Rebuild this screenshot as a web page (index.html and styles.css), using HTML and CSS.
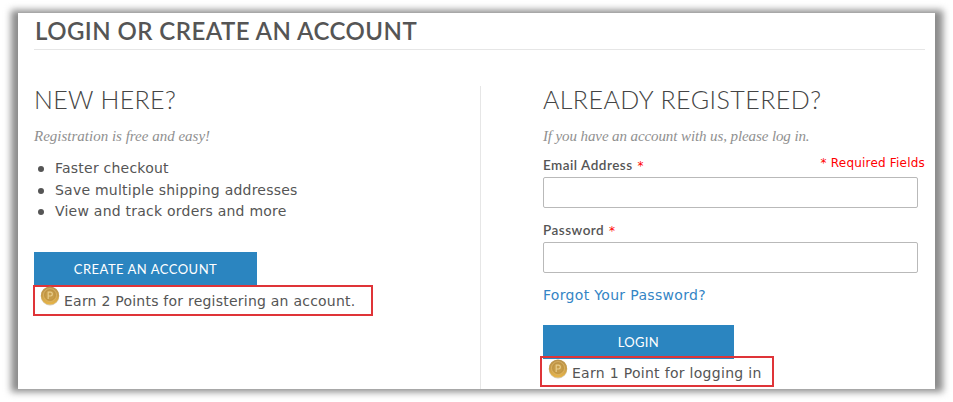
FILE: index.html
```
<!DOCTYPE html>
<html lang="en">
<head>
<meta charset="utf-8">
<title>Login or Create an Account</title>
<link rel="stylesheet" href="styles.css">
</head>
<body>
<svg class="defs" width="0" height="0" aria-hidden="true">
  <defs>
    <linearGradient id="gold" x1="0" y1="0" x2="0" y2="1">
      <stop offset="0" stop-color="#b9924c"/><stop offset=".5" stop-color="#c99d49"/><stop offset="1" stop-color="#e9b646"/>
    </linearGradient>
    <symbol id="coin" viewBox="0 0 20 20">
      <circle cx="10" cy="10.2" r="9.2" fill="#d6c9ae"/>
      <circle cx="10" cy="9.5" r="9.1" fill="url(#gold)"/>
      <circle cx="10" cy="9.2" r="6.6" fill="none" stroke="#d9b163" stroke-width=".9"/>
      <circle cx="10" cy="9.2" r="5.2" fill="#c79c49" stroke="#b58a3c" stroke-width=".5"/>
      <path d="M8.2 13V6.2h2.2a1.9 1.9 0 0 1 0 3.8H8.2" fill="none" stroke="#e8cc8a" stroke-width="1.2"/>
    </symbol>
  </defs>
</svg>
<main class="card">
  <h1 class="title"><span>LOGIN OR CREATE AN ACCOUNT</span></h1>
  <div class="columns">
    <section class="new">
      <h2><span class="h-new">NEW HERE?</span></h2>
      <p class="intro"><span class="i-new">Registration is free and easy!</span></p>
      <ul>
        <li>Faster checkout</li>
        <li>Save multiple shipping addresses</li>
        <li>View and track orders and more</li>
      </ul>
      <button class="btn create" type="button">CREATE AN ACCOUNT</button>
      <div class="points reg"><svg class="coin"><use href="#coin"/></svg><span>Earn 2 Points for registering an account.</span></div>
    </section>
    <section class="registered">
      <h2><span class="h-reg">ALREADY REGISTERED?</span></h2>
      <p class="intro"><span class="i-reg">If you have an account with us, please log in.</span></p>
      <div class="labels"><label for="email">Email Address <em>*</em></label><span class="required">* Required Fields</span></div>
      <input id="email" type="email">
      <div class="labels second"><label for="pass">Password <em>*</em></label></div>
      <input id="pass" type="password">
      <a class="forgot" href="#">Forgot Your Password?</a>
      <button class="btn login" type="button">LOGIN</button>
      <div class="points log"><svg class="coin"><use href="#coin"/></svg><span>Earn 1 Point for logging in</span></div>
    </section>
  </div>
</main>
</body>
</html>
```
FILE: styles.css
```
* { box-sizing: border-box; }
body { margin: 0; padding: 13px 18px; height: 402px; overflow: hidden; background: #fff; color: #555; font: 14px/21.5px "DejaVu Sans", sans-serif; letter-spacing: .23px; }
.defs { position: absolute; }
.card { position: relative; z-index: 0; width: 917px; height: 376px; padding: 0 10px 0 17px; }
.card::before, .card::after { content: ""; position: absolute; z-index: -1; }
.card::before { inset: -3px -8px -3px -7px; background: #8c8c8c; filter: blur(3.5px); z-index: -2; }
.card::after { inset: 0; background: #fff; }
h1, h2, p, ul { margin: 0; font-weight: 400; }
.title { height: 37px; border-bottom: 1px solid #e6e6e6; font: 600 24px/36px Lato, sans-serif; letter-spacing: .45px; color: #555; margin-left: -1px; padding-left: 1px; }
.columns { display: flex; margin-top: 36px; margin-left: -1px; height: 303px; }
.new { width: 448px; border-right: 1px solid #e6e6e6; }
.registered { width: 383px; margin-left: 62px; }
h2 { height: 28px; font: 300 25px/26px Lato, sans-serif; color: #444; white-space: nowrap; }
.h-new { letter-spacing: .35px; }
.h-reg { letter-spacing: .45px; }
.intro { height: 21px; margin-top: 12px; font: italic 15px/21px "Liberation Serif", serif; color: #909090; white-space: nowrap; }
.i-new { letter-spacing: 0; }
.i-reg { letter-spacing: -.1px; }
ul { margin-top: 11px; padding-left: 21px; list-style: none; }
li { position: relative; }
li::before { content: ""; position: absolute; left: -17px; top: 8px; width: 6px; height: 6px; border-radius: 50%; background: #555; }
.btn { display: block; height: 34px; padding: 0; border: 0; background: #2b85c0; color: #fff; font: 13px/34px Lato, sans-serif; }
.create { width: 223px; margin-top: 29px; letter-spacing: .5px; }
.login { width: 191px; margin-top: 19px; letter-spacing: .3px; }
.points { position: relative; display: flex; height: 31px; border: 2px solid #df3438; white-space: nowrap; line-height: 28px; }
.coin { flex: none; width: 20px; height: 20px; margin: 0 4px 0 5px; }
.reg { width: 340px; margin: -1px 0 0 -1px; }
.reg .coin { margin-top: -1px; }
.log { width: 234px; margin: -3px 0 0 -3px; line-height: 31px; letter-spacing: .3px; }
.log .coin { margin: 1px 4px 0 6px; }
.labels { display: flex; justify-content: space-between; height: 30px; font: 600 13.5px/36px Lato, sans-serif; letter-spacing: .5px; }
em { margin-left: 1px; color: red; font: 12px "DejaVu Sans", sans-serif; }
.required { font: 12px/33px "DejaVu Sans", sans-serif; color: red; letter-spacing: .2px; }
input { display: block; width: 375px; height: 31px; border: 1px solid #b9b9b9; border-radius: 2px; background: #fff; padding: 0 8px; }
.second { height: 34px; line-height: 45px; }
.forgot { display: block; margin-top: 10px; height: 23px; line-height: 24px; color: #3485c5; text-decoration: none; letter-spacing: .33px; }
```
